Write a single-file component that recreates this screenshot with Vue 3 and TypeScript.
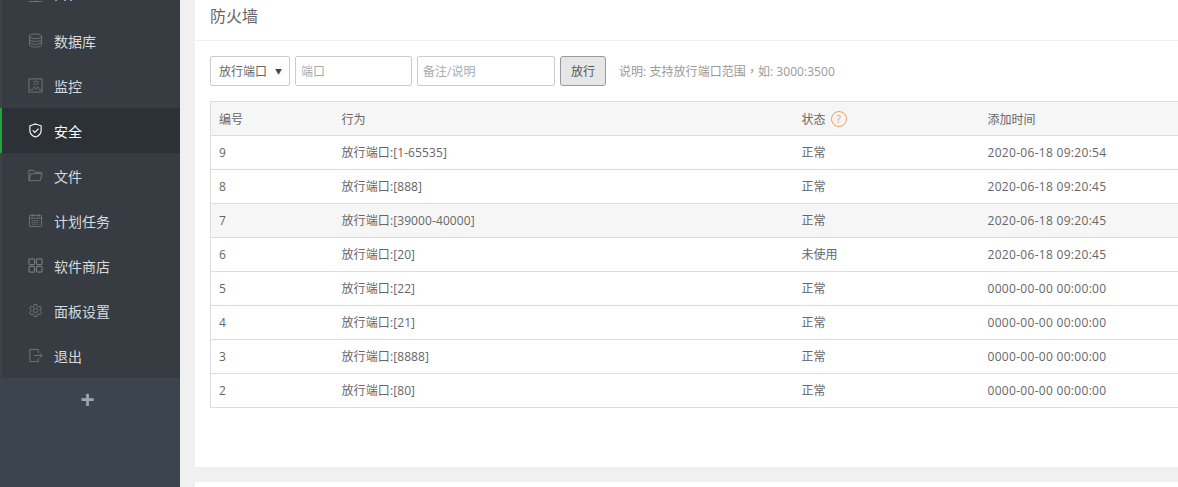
<script setup lang="ts">
const menu = [
  { key: 'ftp', label: 'FTP' },
  { key: 'db', label: '数据库' },
  { key: 'monitor', label: '监控' },
  { key: 'safe', label: '安全', active: true },
  { key: 'file', label: '文件' },
  { key: 'cron', label: '计划任务' },
  { key: 'store', label: '软件商店' },
  { key: 'config', label: '面板设置' },
  { key: 'exit', label: '退出' },
]
const rows = [
  { id: 9, act: '放行端口:[1-65535]', st: '正常', t: '2020-06-18 09:20:54' },
  { id: 8, act: '放行端口:[888]', st: '正常', t: '2020-06-18 09:20:45' },
  { id: 7, act: '放行端口:[39000-40000]', st: '正常', t: '2020-06-18 09:20:45', hover: true },
  { id: 6, act: '放行端口:[20]', st: '未使用', t: '2020-06-18 09:20:45' },
  { id: 5, act: '放行端口:[22]', st: '正常', t: '0000-00-00 00:00:00' },
  { id: 4, act: '放行端口:[21]', st: '正常', t: '0000-00-00 00:00:00' },
  { id: 3, act: '放行端口:[8888]', st: '正常', t: '0000-00-00 00:00:00' },
  { id: 2, act: '放行端口:[80]', st: '正常', t: '0000-00-00 00:00:00' },
]
</script>

<template>
  <div class="page">
    <aside class="side">
      <ul class="menu">
        <li v-for="m in menu" :key="m.key" class="item" :class="{ active: m.active }">
          <svg class="ico" viewBox="0 0 16 16" fill="none" stroke="currentColor" stroke-width="1">
            <template v-if="m.key === 'ftp'">
              <rect x="2" y="1.5" width="12" height="9" />
              <path d="M1 14.500h14M8 10.500v4" />
            </template>
            <template v-else-if="m.key === 'db'">
              <ellipse cx="8" cy="3.500" rx="6.500" ry="2.500" />
              <path d="M1.500 3.500v9c0 1.400 2.900 2.500 6.500 2.500s6.500-1.100 6.500-2.500v-9M1.500 6.500c0 1.400 2.900 2.500 6.500 2.500s6.500-1.100 6.500-2.500M1.500 9.500c0 1.400 2.900 2.500 6.500 2.500s6.500-1.100 6.500-2.500" />
            </template>
            <template v-else-if="m.key === 'monitor'">
              <rect x="1" y="1" width="14" height="14" />
              <path d="M2 12.500h3l1.500-3.500 2 3 2-3 1.500 3.500h2.500M5.500 3.500h5v3h-5" stroke-width="0.8" />
            </template>
            <template v-else-if="m.key === 'safe'">
              <path d="M8 1l6 2v5c0 3.500-2.500 5.800-6 7-3.500-1.200-6-3.500-6-7V3z" stroke-width="1.200" />
              <path d="M5 7.800l2.300 2.300L11.200 6" stroke-width="1.200" />
            </template>
            <template v-else-if="m.key === 'file'">
              <path d="M1 13.500V2.500h5l1.500 2h6.500v1.500M1 13.500h12l2-7.500H3z" />
            </template>
            <template v-else-if="m.key === 'cron'">
              <rect x="1.500" y="2.500" width="13" height="12" rx="1" />
              <path d="M4.500 1v3M11.500 1v3M1.500 5.500h13" />
              <path d="M4 8h8M4 10h8M4 12h8" stroke-dasharray="1.500 1" />
            </template>
            <template v-else-if="m.key === 'store'">
              <g stroke-width="1.300">
                <rect x="1" y="1" width="6" height="6" rx="1.200" />
                <rect x="9" y="1" width="6" height="6" rx="1.200" />
                <rect x="1" y="9" width="6" height="6" rx="1.200" />
                <rect x="9" y="9" width="6" height="6" rx="1.200" />
              </g>
            </template>
            <template v-else-if="m.key === 'config'">
              <path d="M6.700 1.500h2.600l.4 2 1.500.8 1.900-.7 1.300 2.300-1.500 1.300v1.600l1.500 1.300-1.300 2.300-1.900-.7-1.500.8-.4 2H6.700l-.4-2-1.500-.8-1.900.7-1.300-2.300 1.500-1.300V7.200L1.600 5.900l1.300-2.300 1.900.7 1.500-.8z" />
              <circle cx="8" cy="8" r="2.300" />
            </template>
            <template v-else>
              <path d="M11 5V1.500H2v13h9V11M6.500 8h8.500M12.500 5.500L15 8l-2.500 2.500" />
            </template>
          </svg>
          <span>{{ m.label }}</span>
        </li>
      </ul>
      <div class="plus">+</div>
    </aside>

    <main class="main">
      <section class="card">
        <h2 class="title">防火墙</h2>
        <div class="body">
          <div class="form">
            <div class="select"><span>放行端口</span><i class="caret">▼</i></div>
            <input class="input port" placeholder="端口" />
            <input class="input note" placeholder="备注/说明" />
            <button class="btn">放行</button>
            <span class="hint">说明: 支持放行端口范围<span class="comma">，</span>如: 3000:3500</span>
          </div>
          <table class="tbl">
            <colgroup>
              <col class="c1" /><col class="c2" /><col class="c3" /><col class="c4" />
            </colgroup>
            <thead>
              <tr>
                <th>编号</th>
                <th>行为</th>
                <th><span class="head-status">状态<span class="help">?</span></span></th>
                <th>添加时间</th>
              </tr>
            </thead>
            <tbody>
              <tr v-for="r in rows" :key="r.id" :class="{ hover: r.hover }">
                <td>{{ r.id }}</td>
                <td class="act">{{ r.act }}</td>
                <td>{{ r.st }}</td>
                <td class="time">{{ r.t }}</td>
              </tr>
            </tbody>
          </table>
        </div>
      </section>
      <section class="card next"></section>
    </main>
  </div>
</template>

<style>
html, body { margin: 0; height: 100%; overflow: hidden; background: #f0f0f0; }
</style>

<style scoped>
.page {
  display: flex;
  width: 1178px;
  height: 487px;
  overflow: hidden;
  background: #f0f0f0;
  font-family: "Open Sans", "Noto Sans CJK SC", sans-serif;
  font-size: 12px;
  color: #666;
}
.side {
  flex: 0 0 180px;
  background: #3c444d;
  overflow: hidden;
}
.menu {
  list-style: none;
  margin: -27px 0 0;
  padding: 0;
  background: #363c42;
}
.item {
  display: flex;
  align-items: center;
  height: 45px;
  padding-left: 28px;
  box-sizing: border-box;
  color: #d7dadd;
  font-size: 14px;
  box-shadow: inset 2px 0 0 #3f4347;
}
.item .ico {
  width: 15px;
  height: 15px;
  margin-right: 11px;
  color: #73787d;
}
.item.active {
  background: #2c3138;
  color: #fff;
  box-shadow: inset 2px 0 0 #20a53a;
}
.item.active .ico { color: #fff; }
.plus {
  height: 44px;
  padding-right: 5px;
  text-align: center;
  line-height: 44px;
  color: #a0a5aa;
  font-size: 24px;
  font-weight: 700;
  font-family: "Liberation Sans", sans-serif;
}
.main {
  flex: 1;
  min-width: 0;
  padding-left: 15px;
  overflow: hidden;
}
.card {
  width: 1100px;
  height: 467px;
  background: #fff;
}
.card.next {
  height: 40px;
  margin-top: 15px;
}
.title {
  margin: 0;
  height: 41px;
  box-sizing: border-box;
  padding: 5px 15px 0;
  border-bottom: 1px solid #f0f0f0;
  font-size: 16px;
  font-weight: 400;
  line-height: 22px;
  color: #666;
}
.body { padding: 15px 15px 0; }
.form {
  display: flex;
  align-items: center;
  gap: 5px;
  height: 30px;
  margin-bottom: 15px;
}
.select {
  width: 80px;
  height: 30px;
  box-sizing: border-box;
  display: flex;
  align-items: center;
  justify-content: space-between;
  padding: 0 7px 0 8px;
  border: 1px solid #ccc;
  border-radius: 2px;
}
.caret {
  font-style: normal;
  font-size: 7px;
  color: #444;
}
.input {
  height: 30px;
  box-sizing: border-box;
  padding: 0 5px;
  border: 1px solid #ccc;
  border-radius: 2px;
  outline: none;
  font: inherit;
  background: #fff;
}
.input::placeholder { color: #aaa; opacity: 1; }
.port { width: 117px; }
.note { width: 138px; }
.btn {
  width: 46px;
  height: 30px;
  padding: 0;
  border: 1px solid #999;
  border-radius: 3px;
  background: #e6e6e6;
  color: #555;
  font: inherit;
}
.hint {
  margin-left: 8px;
  color: #999;
  letter-spacing: 0.05px;
}
.comma { font-family: "Noto Sans CJK TC", sans-serif; }
.tbl {
  width: 1060px;
  table-layout: fixed;
  border-collapse: collapse;
  border-left: 1px solid #ddd;
}
.c1 { width: 124px; }
.c2 { width: 460px; }
.c3 { width: 186px; }
th, td {
  height: 34px;
  box-sizing: border-box;
  padding: 0 8px 0 7px;
  border-top: 1px solid #ddd;
  border-bottom: 1px solid #ddd;
  text-align: left;
  font-weight: 400;
  color: #666;
}
th:first-child, td:first-child { padding-left: 8px; }
td { padding-bottom: 1px; }
th { background: #f6f6f6; }
tr.hover td { background: #f6f6f6; }
.act { letter-spacing: 0.1px; }
.time { letter-spacing: 0.3px; }
.head-status {
  display: inline-flex;
  align-items: center;
  gap: 5px;
  vertical-align: middle;
}
.help {
  width: 16px;
  height: 16px;
  box-sizing: border-box;
  border: 1.500px solid #eea24a;
  border-radius: 50%;
  color: #eea24a;
  text-align: center;
  line-height: 13px;
  font-size: 11px;
}
</style>
